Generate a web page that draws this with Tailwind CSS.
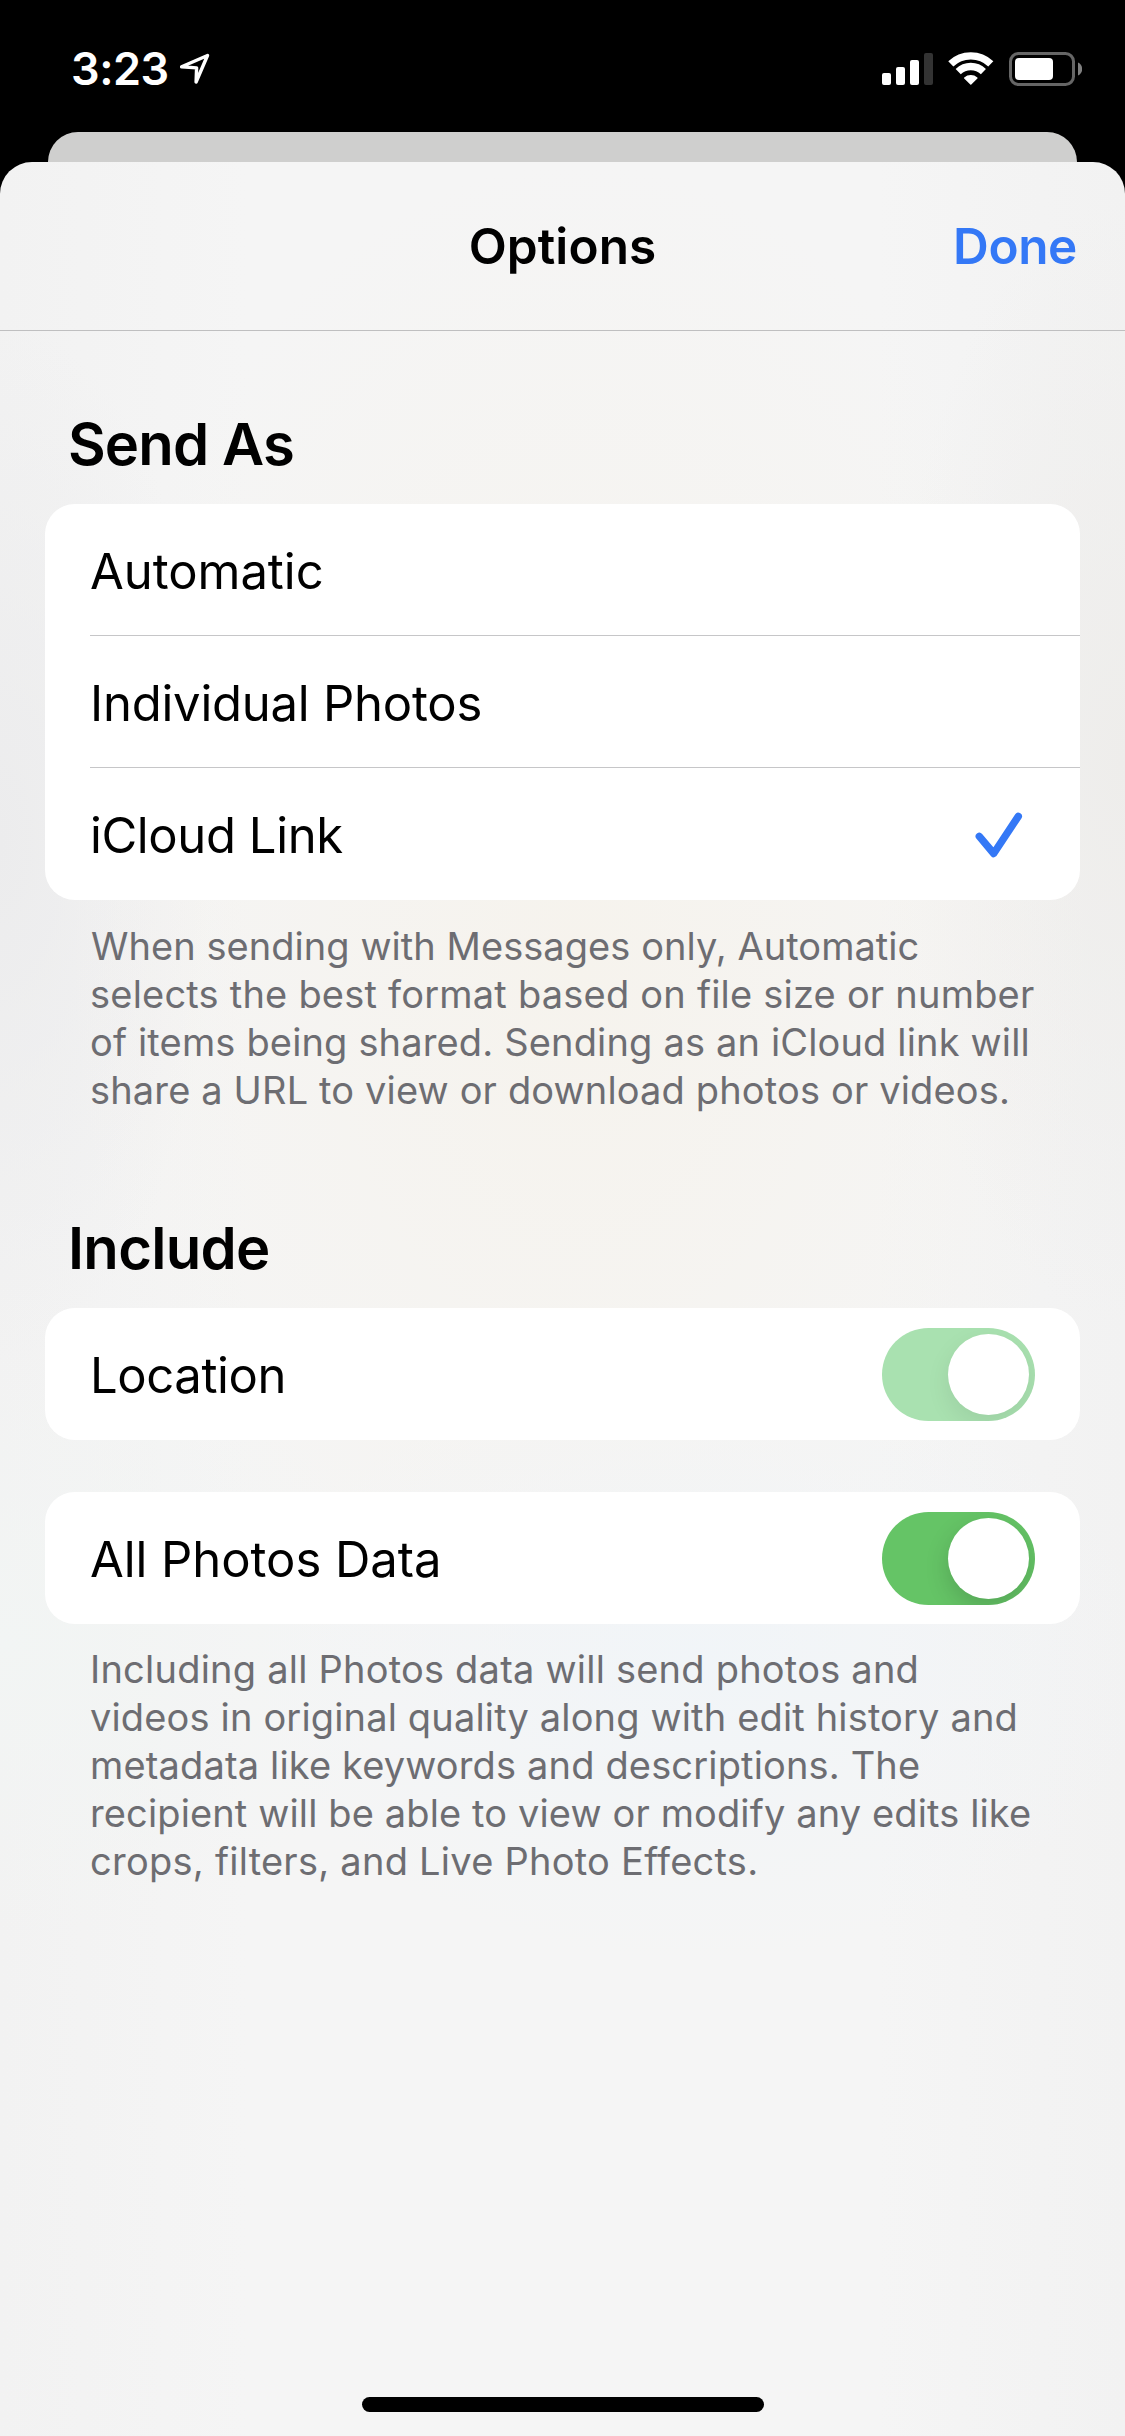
<!DOCTYPE html>
<html lang="en">
<head>
<meta charset="utf-8">
<title>Options</title>
<script src="https://cdn.jsdelivr.net/npm/@tailwindcss/browser@4"></script>
</head>
<body class="bg-black">
<div class="flex h-[2436px] w-[1125px] flex-col overflow-hidden bg-black font-['Inter',sans-serif] text-black">

  <!-- Status bar -->
  <div class="flex h-[132px] shrink-0 items-start justify-between pr-[43px] pl-[71px] text-white">
    <div class="flex items-start pt-[42px]">
      <span class="w-[109px] text-[45px] leading-[54px] font-semibold tracking-[-0.5px]">3:23</span>
      <svg class="mt-[11px] h-8 w-8" viewBox="0 0 32 32" fill="none" stroke="currentColor" stroke-width="3.4" stroke-linejoin="round"><path d="M1.6 13.7 27.5 2.5 16.1 29 16.6 14.9Z"/></svg>
    </div>
    <div class="flex items-start pt-[52px]">
      <svg class="h-[34px] w-[52px]" viewBox="0 0 52 34" fill="currentColor"><rect x="0" y="21" width="9" height="12" rx="2"/><rect x="14" y="15" width="9" height="18" rx="2"/><rect x="28" y="8" width="9" height="25" rx="2"/><rect x="42" y="1" width="9" height="32" rx="2" fill="#333"/></svg>
      <svg class="ml-[14px] h-[34px] w-[46px]" viewBox="0 0 46 34" fill="none" stroke="currentColor" stroke-width="7.4"><path d="M2.8 11.9A29 29 0 0 1 42.8 11.9"/><path d="M10.2 19.6A18.3 18.3 0 0 1 35.4 19.6"/><path d="M16.7 26A9.6 9.6 0 0 1 28.9 26L22.8 32.1Z" fill="currentColor" stroke-width="1.4" stroke-linejoin="round"/></svg>
      <svg class="ml-[15px] h-[34px] w-[73px]" viewBox="0 0 73 34"><rect x="1.5" y="1.5" width="63" height="31" rx="8" fill="none" stroke="#666" stroke-width="3"/><rect x="6" y="6" width="38" height="22" rx="4" fill="#fff"/><path d="M69 10.5C71.6 11.6 73.2 14 73.2 17S71.6 22.4 69 23.5Z" fill="#808080"/></svg>
    </div>
  </div>

  <!-- Sheet stacked underneath -->
  <div class="mx-12 h-[30px] shrink-0 rounded-t-[30px] bg-[#cfcfce]"></div>

  <!-- Options sheet -->
  <div class="flex grow flex-col rounded-t-[32px] bg-[#f2f2f2] bg-[radial-gradient(ellipse_460px_300px_at_700px_1500px,#f1f5f8_0%,#f1f5f800_100%),radial-gradient(ellipse_520px_800px_at_580px_800px,#f6f3ed_0%,#f6f3ed00_100%),radial-gradient(ellipse_240px_560px_at_1125px_600px,#eeedeb_0%,#eeedeb00_100%),radial-gradient(ellipse_220px_520px_at_0px_680px,#ececed_0%,#ececed00_100%),radial-gradient(ellipse_400px_300px_at_0px_1480px,#f2f5f4_0%,#f2f5f400_100%),linear-gradient(90deg,#f2f2f2_0%,#f5f5f5_22%,#f5f5f5_78%,#f2f2f2_100%)]">
    <header class="grid h-[169px] shrink-0 grid-cols-3 items-center border-b border-[#bfbfc0] pr-[48px] pl-[48px] text-[49.5px] font-semibold">
      <span></span>
      <h1 class="text-center tracking-[0.085px]">Options</h1>
      <button class="text-right tracking-[-0.39px] text-[#3478f6]">Done</button>
    </header>

    <main class="flex flex-col px-[45px] pt-[83px]">
      <h2 class="mb-[30px] pl-[23px] text-[58px] leading-[60px] font-semibold tracking-[-0.85px]">Send As</h2>
      <ul class="rounded-[30px] bg-white pl-[45px] text-[49px]">
        <li class="flex h-[132px] items-center border-b border-[#c6c6c8] pt-[4px]"><span class="tracking-[-0.05px]">Automatic</span></li>
        <li class="flex h-[132px] items-center border-b border-[#c6c6c8] pt-[4px]"><span class="tracking-[-0.225px]">Individual Photos</span></li>
        <li class="flex h-[132px] items-center justify-between pt-[3px] pr-[57px]"><span class="tracking-[-0.4px]">iCloud Link</span>
          <svg class="-mt-[2px] h-[46px] w-[48px]" viewBox="0 0 48 46" fill="none" stroke="#3478f6" stroke-width="7.4" stroke-linecap="round" stroke-linejoin="round"><path d="M4.3 24.4 18.7 41.5 43.3 4.4"/></svg>
        </li>
      </ul>
      <p class="pt-[22px] pl-[45px] text-[38px] leading-[48px] whitespace-nowrap text-[#6d6d72]">
        <span class="block pl-px tracking-[0.05px]">When sending with Messages only, Automatic</span>
        <span class="block tracking-[0.213px]">selects the best format based on file size or number</span>
        <span class="block tracking-[0.156px]">of items being shared. Sending as an iCloud link will</span>
        <span class="block tracking-[0.15px]">share a URL to view or download photos or videos.</span>
      </p>

      <h2 class="mt-[104px] mb-[30px] pl-[23px] text-[58px] leading-[60px] font-semibold tracking-[-0.7px]">Include</h2>
      <div class="flex h-[132px] items-center justify-between rounded-[30px] bg-white pr-[45px] pl-[45px] text-[49px]">
        <span class="pt-[3px] tracking-[-0.4px]">Location</span>
        <div class="flex h-[93px] w-[153px] items-center justify-end overflow-hidden rounded-full bg-[#a9e1b0] pr-1.5"><div class="size-[81px] rounded-full bg-white shadow-[0_9px_24px_rgba(0,0,0,0.08)]"></div></div>
      </div>
      <div class="mt-[52px] flex h-[132px] items-center justify-between rounded-[30px] bg-white pr-[45px] pl-[45px] text-[49px]">
        <span class="pt-[3px] tracking-[-0.05px]">All Photos Data</span>
        <div class="flex h-[93px] w-[153px] items-center justify-end overflow-hidden rounded-full bg-[#65c466] pr-1.5"><div class="size-[81px] rounded-full bg-white shadow-[0_9px_24px_rgba(0,0,0,0.16)]"></div></div>
      </div>
      <p class="pt-[21px] pl-[45px] text-[38px] leading-[48px] whitespace-nowrap text-[#6d6d72]">
        <span class="block tracking-[0.22px]">Including all Photos data will send photos and</span>
        <span class="block tracking-[0.155px]">videos in original quality along with edit history and</span>
        <span class="block tracking-[0.153px]">metadata like keywords and descriptions. The</span>
        <span class="block tracking-[0.13px]">recipient will be able to view or modify any edits like</span>
        <span class="block tracking-[0.25px]">crops, filters, and Live Photo Effects.</span>
      </p>
    </main>

    <!-- Home indicator -->
    <div class="mt-auto mb-6 h-[15px] w-[402px] self-center rounded-full bg-black"></div>
  </div>
</div>
</body>
</html>
